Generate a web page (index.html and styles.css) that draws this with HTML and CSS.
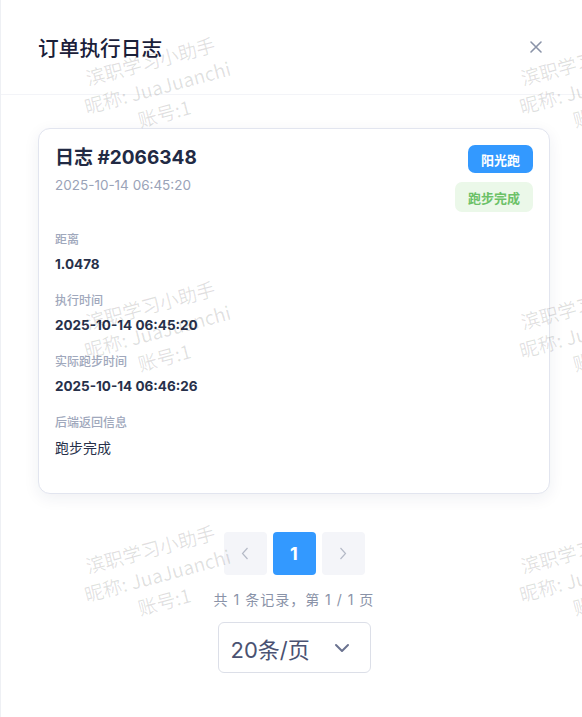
FILE: index.html
```html
<!DOCTYPE html>
<html lang="zh-CN">
<head>
<meta charset="utf-8">
<title>订单执行日志</title>
<link rel="stylesheet" href="styles.css">
</head>
<body>
<div class="dialog">
  <header class="dlg-head">
    <h1 class="dlg-title">订单执行日志</h1>
    <button class="dlg-close" aria-label="关闭">
      <svg width="14" height="14" viewBox="0 0 14 14"><path d="M2 2L12 12M12 2L2 12" stroke="#8a93a8" stroke-width="1.6" stroke-linecap="round" fill="none"/></svg>
    </button>
  </header>
  <main class="dlg-body">
    <section class="card">
      <div class="card-head">
        <div class="card-titles">
          <div class="card-title">日志 #2066348</div>
          <div class="card-date">2025-10-14 06:45:20</div>
        </div>
        <div class="badges">
          <span class="badge badge-blue">阳光跑</span>
          <span class="badge badge-green">跑步完成</span>
        </div>
      </div>
      <div class="field">
        <div class="field-label">距离</div>
        <div class="field-value">1.0478</div>
      </div>
      <div class="field">
        <div class="field-label">执行时间</div>
        <div class="field-value">2025-10-14 06:45:20</div>
      </div>
      <div class="field">
        <div class="field-label">实际跑步时间</div>
        <div class="field-value">2025-10-14 06:46:26</div>
      </div>
      <div class="field">
        <div class="field-label">后端返回信息</div>
        <div class="field-value plain">跑步完成</div>
      </div>
    </section>
    <nav class="pager">
      <div class="pager-btns">
        <button class="pg pg-arrow" aria-label="上一页">
          <svg width="8" height="13" viewBox="0 0 8 13"><path d="M6.5 1L1.5 6.5L6.5 12" stroke="#b5bac7" stroke-width="1.2" fill="none"/></svg>
        </button>
        <button class="pg pg-active">1</button>
        <button class="pg pg-arrow" aria-label="下一页">
          <svg width="8" height="13" viewBox="0 0 8 13"><path d="M1.5 1L6.5 6.5L1.5 12" stroke="#b5bac7" stroke-width="1.2" fill="none"/></svg>
        </button>
      </div>
      <div class="pager-info">共 1 条记录，第 1 / 1 页</div>
      <div class="pager-size">
        <span>20条/页</span>
        <svg width="16" height="10" viewBox="0 0 16 10"><path d="M2 2L8 8L14 2" stroke="#6b7390" stroke-width="2" fill="none" stroke-linecap="round" stroke-linejoin="round"/></svg>
      </div>
    </nav>
  </main>
  <div class="watermarks" aria-hidden="true">
    <div class="wm"><div class="wm-in"><span>滨职学习小助手</span><span>昵称: JuaJuanchi</span><span>账号:1</span></div></div>
    <div class="wm"><div class="wm-in"><span>滨职学习小助手</span><span>昵称: JuaJuanchi</span><span>账号:1</span></div></div>
    <div class="wm"><div class="wm-in"><span>滨职学习小助手</span><span>昵称: JuaJuanchi</span><span>账号:1</span></div></div>
    <div class="wm"><div class="wm-in"><span>滨职学习小助手</span><span>昵称: JuaJuanchi</span><span>账号:1</span></div></div>
    <div class="wm"><div class="wm-in"><span>滨职学习小助手</span><span>昵称: JuaJuanchi</span><span>账号:1</span></div></div>
    <div class="wm"><div class="wm-in"><span>滨职学习小助手</span><span>昵称: JuaJuanchi</span><span>账号:1</span></div></div>
  </div>
</div>
</body>
</html>
```

FILE: styles.css
```css
* { box-sizing: border-box; }
html, body { margin: 0; padding: 0; background: #fff; }
body {
  font-family: Inter, "Noto Sans CJK SC", sans-serif;
  color: #27304a;
}
.dialog {
  position: relative;
  width: 582px;
  height: 717px;
  overflow: hidden;
  border-left: 1px solid #eef0f4;
  background: #fff;
}
.dlg-head {
  height: 95px;
  display: flex;
  align-items: center;
  justify-content: space-between;
  padding: 0 39px 0 37px;
  border-bottom: 1px solid #f3f4f8;
}
.dlg-title {
  margin: 0;
  font-size: 20.7px;
  font-weight: 500;
  color: #1a2039;
  line-height: 28px;
  font-family: "Noto Sans CJK SC", sans-serif;
}
.dlg-close {
  border: 0;
  background: none;
  padding: 0;
  width: 14px;
  height: 14px;
  display: flex;
}
.dlg-body {
  padding: 33px 32px 0 37px;
}
.card {
  border: 1px solid #e2e5ef;
  border-radius: 12px;
  padding: 16px 16px 19px;
  box-shadow: 0 4px 16px rgba(30, 40, 80, 0.07);
  background: #fff;
}
.card-head {
  display: flex;
  justify-content: space-between;
  align-items: flex-start;
  margin-bottom: 18px;
}
.card-title {
  font-size: 19px;
  font-weight: 700;
  line-height: 26px;
  color: #222a44;
}
.card-date {
  margin-top: 4px;
  font-size: 13.5px;
  line-height: 20px;
  color: #9aa3b8;
}
.badges {
  display: flex;
  flex-direction: column;
  align-items: flex-end;
  gap: 9px;
}
.badge {
  font-family: "Noto Sans CJK SC", sans-serif;
  font-size: 13px;
  font-weight: 700;
  border-radius: 7px;
  padding: 0 13px;
  display: inline-flex;
  align-items: center;
}
.badge-blue {
  height: 28px;
  background: #3399ff;
  color: #fff;
}
.badge-green {
  height: 30px;
  background: #ebf8e9;
  color: #6bc167;
}
.field { margin-bottom: 17px; }
.field-label {
  font-family: "Noto Sans CJK SC", sans-serif;
  font-size: 12px;
  font-weight: 500;
  line-height: 17px;
  color: #a0a8bc;
}
.field-value {
  margin-top: 7px;
  font-size: 13.5px;
  font-weight: 700;
  line-height: 20px;
  color: #27304a;
}
.field-value.plain {
  font-size: 14px;
  font-weight: 400;
  font-family: "Noto Sans CJK SC", sans-serif;
  color: #27304a;
}
.pager {
  display: flex;
  flex-direction: column;
  align-items: center;
  padding-top: 38px;
}
.pager-btns {
  display: flex;
  gap: 6px;
}
.pg {
  width: 43px;
  height: 43px;
  border: 0;
  border-radius: 4px;
  display: flex;
  align-items: center;
  justify-content: center;
  padding: 0;
  font-family: Inter, sans-serif;
}
.pg-arrow { background: #f4f5f9; }
.pg-active {
  background: #3399ff;
  color: #fff;
  font-size: 18px;
  font-weight: 700;
}
.pager-info {
  margin-top: 15px;
  font-size: 14px;
  letter-spacing: 1px;
  line-height: 20px;
  color: #8a93a8;
}
.pager-size {
  margin-top: 12px;
  width: 153px;
  height: 51px;
  border: 1px solid #dcdfe8;
  border-radius: 6px;
  display: flex;
  align-items: center;
  justify-content: space-between;
  padding: 0 20px 0 12px;
  font-size: 22px;
  color: #4a5272;
}
.watermarks {
  position: absolute;
  left: -61px;
  top: -36px;
  display: grid;
  grid-template-columns: repeat(2, 435px);
  grid-auto-rows: 244px;
  pointer-events: none;
}
.wm {
  display: flex;
  align-items: center;
  justify-content: center;
}
.wm-in {
  display: flex;
  flex-direction: column;
  align-items: center;
  transform: rotate(-15deg);
  font-family: "Noto Sans CJK SC", sans-serif;
  font-size: 19px;
  line-height: 27px;
  color: rgba(0, 0, 0, 0.12);
  white-space: nowrap;
}
```
